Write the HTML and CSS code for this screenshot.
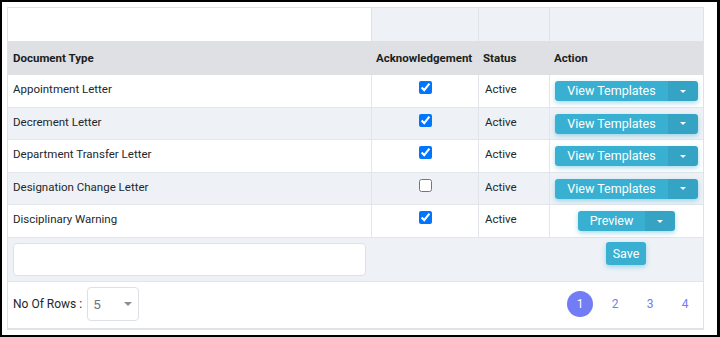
FILE: index.html
```html
<!DOCTYPE html>
<html lang="en">
<head>
    <meta charset="UTF-8">
    <meta name="viewport" content="width=device-width, initial-scale=1.0">
    <title>Document Templates</title>
    <link rel="stylesheet" href="styles.css">
</head>
<body>
    <div class="frame">
        <div class="panel">
            <table class="doc-table">
                <colgroup>
                    <col class="col-type">
                    <col class="col-ack">
                    <col class="col-status">
                    <col class="col-action">
                </colgroup>
                <thead>
                    <tr class="filter-row">
                        <th class="blank"></th>
                        <th></th>
                        <th></th>
                        <th></th>
                    </tr>
                    <tr class="head-row">
                        <th>Document Type</th>
                        <th>Acknowledgement</th>
                        <th>Status</th>
                        <th>Action</th>
                    </tr>
                </thead>
                <tbody>
                    <tr>
                        <td>Appointment Letter</td>
                        <td class="ack"><input type="checkbox" checked></td>
                        <td>Active</td>
                        <td class="action">
                            <div class="split"><button class="btn-main">View Templates</button><button class="btn-caret"><span class="caret"></span></button></div>
                        </td>
                    </tr>
                    <tr class="alt">
                        <td>Decrement Letter</td>
                        <td class="ack"><input type="checkbox" checked></td>
                        <td>Active</td>
                        <td class="action">
                            <div class="split"><button class="btn-main">View Templates</button><button class="btn-caret"><span class="caret"></span></button></div>
                        </td>
                    </tr>
                    <tr>
                        <td>Department Transfer Letter</td>
                        <td class="ack"><input type="checkbox" checked></td>
                        <td>Active</td>
                        <td class="action">
                            <div class="split"><button class="btn-main">View Templates</button><button class="btn-caret"><span class="caret"></span></button></div>
                        </td>
                    </tr>
                    <tr class="alt">
                        <td>Designation Change Letter</td>
                        <td class="ack"><input type="checkbox"></td>
                        <td>Active</td>
                        <td class="action">
                            <div class="split"><button class="btn-main">View Templates</button><button class="btn-caret"><span class="caret"></span></button></div>
                        </td>
                    </tr>
                    <tr>
                        <td>Disciplinary Warning</td>
                        <td class="ack"><input type="checkbox" checked></td>
                        <td>Active</td>
                        <td class="action">
                            <div class="split"><button class="btn-main">Preview</button><button class="btn-caret"><span class="caret"></span></button></div>
                        </td>
                    </tr>
                </tbody>
                <tfoot>
                    <tr>
                        <td><input class="note-input" type="text"></td>
                        <td colspan="2"></td>
                        <td class="action"><button class="btn-save">Save</button></td>
                    </tr>
                </tfoot>
            </table>
            <div class="pager">
                <div class="rows">
                    <span>No Of Rows :</span>
                    <div class="rows-select"><span class="rows-value">5</span><span class="select-caret"></span></div>
                </div>
                <ul class="pages">
                    <li class="page current">1</li>
                    <li class="page">2</li>
                    <li class="page">3</li>
                    <li class="page">4</li>
                </ul>
            </div>
        </div>
    </div>
</body>
</html>
```

FILE: styles.css
```css
body {
    margin: 0;
    font-family: Roboto, "Liberation Sans", sans-serif;
    font-size: 11.5px;
    color: #23272b;
}
.frame {
    width: 720px;
    height: 337px;
    box-sizing: border-box;
    border: 2px solid #000;
    border-right-width: 3px;
    padding: 5px;
    background: #fff;
}
.panel {
    width: 697px;
    box-sizing: border-box;
    border: 1px solid #dfe2e6;
    border-bottom-width: 2px;
}
.doc-table {
    width: 100%;
    table-layout: fixed;
    border-collapse: separate;
    border-spacing: 0;
}
.col-type { width: 363px; }
.col-ack { width: 107px; }
.col-status { width: 71px; }
.col-action { width: 154px; }
th, td {
    text-align: left;
    padding: 0 5px;
    line-height: 16px;
}
.filter-row th {
    height: 33px;
    padding: 0;
    background: #eef2f7;
    border-left: 1px solid #dfe2e6;
}
.filter-row th.blank {
    background: #fff;
    border-left: none;
}
.head-row th {
    height: 34px;
    background: #dfe0e4;
    font-weight: 700;
    color: #1b1e21;
}
tbody td {
    vertical-align: top;
    padding: 6px 5px 5.5px 6px;
    border-bottom: 1px solid #e2e5e9;
}
tbody td:first-child {
    padding-left: 5px;
}
tbody td + td {
    border-left: 1px solid #e2e5e9;
}
tbody tr.alt td {
    background: #eef2f7;
}
td.ack input {
    display: block;
    margin: 0 auto;
    width: 13px;
    height: 13px;
}
td.action {
    text-align: center;
    padding-left: 5px;
    padding-right: 5px;
    white-space: nowrap;
}
.split {
    display: inline-flex;
    height: 20px;
    border-radius: 3px;
    box-shadow: 0 2px 5px rgba(57, 175, 209, 0.45);
    overflow: hidden;
    vertical-align: top;
}
.split button {
    flex-shrink: 0;
    border: none;
    margin: 0;
    color: #fff;
    font-family: Roboto, "Liberation Sans", sans-serif;
    font-size: 12.5px;
    line-height: 20px;
    height: 20px;
    white-space: nowrap;
}
.btn-main {
    padding: 0 12px;
    background: #39afd1;
}
.btn-caret {
    width: 30px;
    padding: 0;
    background: #34a3c4;
    display: flex;
    align-items: center;
    justify-content: center;
}
.caret {
    width: 0;
    height: 0;
    border-top: 3px solid #fff;
    border-left: 3px solid transparent;
    border-right: 3px solid transparent;
}
tfoot td {
    background: #eef2f7;
    vertical-align: top;
    padding: 5px;
    height: 33px;
}
.note-input {
    display: block;
    width: 100%;
    height: 33px;
    box-sizing: border-box;
    border: 1px solid #dde1e6;
    border-radius: 4px;
    background: #fff;
    margin: 0;
}
tfoot td.action {
    padding-top: 4px;
}
.btn-save {
    height: 23px;
    padding: 0 7px;
    border: none;
    border-radius: 3px;
    background: #39afd1;
    color: #fff;
    font-family: Roboto, "Liberation Sans", sans-serif;
    font-size: 12.5px;
    box-shadow: 0 2px 5px rgba(57, 175, 209, 0.45);
}
.pager {
    display: flex;
    justify-content: space-between;
    align-items: center;
    border-top: 1px solid #e2e5e9;
    padding: 5px 5px 7px 5px;
    font-size: 12px;
}
.rows {
    display: flex;
    align-items: center;
    gap: 5px;
}
.rows-select {
    width: 52px;
    height: 34px;
    box-sizing: border-box;
    border: 1px solid #dde1e6;
    border-radius: 4px;
    display: flex;
    align-items: center;
    justify-content: space-between;
    padding: 0 6px 0 5px;
}
.rows-value {
    color: #6c757d;
    font-size: 13.5px;
}
.select-caret {
    width: 0;
    height: 0;
    border-top: 4px solid #8a8f95;
    border-left: 4px solid transparent;
    border-right: 4px solid transparent;
}
.pages {
    display: flex;
    gap: 9px;
    list-style: none;
    margin: 0;
    padding: 0;
}
.page {
    width: 26px;
    height: 26px;
    line-height: 26px;
    text-align: center;
    color: #727cf5;
    font-size: 12px;
}
.page.current {
    background: #727cf5;
    color: #fff;
    border-radius: 50%;
}
```
